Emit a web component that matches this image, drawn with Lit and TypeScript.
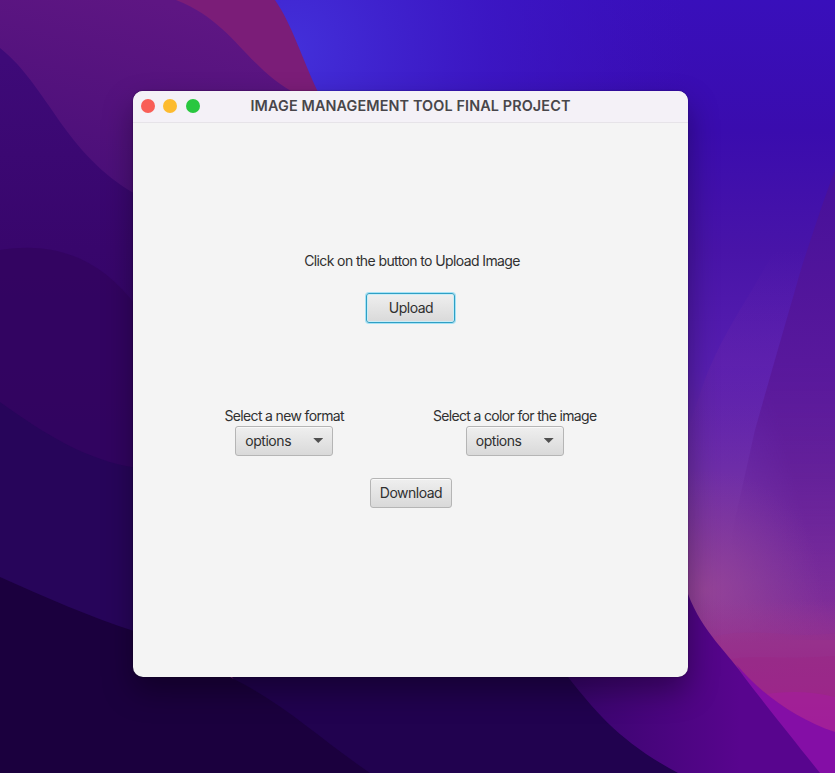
import { LitElement, html, css } from "lit";
import { customElement } from "lit/decorators.js";

@customElement("desktop-wallpaper")
class DesktopWallpaper extends LitElement {
  static styles = css`
    :host { display: block; }
    svg { display: block; width: 835px; height: 773px; }
  `;
  render() {
    return html`<svg viewBox="0 0 835 773" aria-hidden="true">
      <defs>
        <linearGradient id="sky" gradientUnits="userSpaceOnUse" x1="740" y1="0" x2="740" y2="660">
          <stop offset="0" stop-color="#390fbb" /><stop offset=".2" stop-color="#3a0cae" />
          <stop offset=".38" stop-color="#4814a8" /><stop offset=".56" stop-color="#571eb0" />
          <stop offset=".74" stop-color="#7230a6" /><stop offset=".88" stop-color="#84389c" />
          <stop offset="1" stop-color="#963290" />
        </linearGradient>
        <radialGradient id="light" gradientUnits="userSpaceOnUse" cx="290" cy="50" r="400">
          <stop offset="0" stop-color="#4330da" /><stop offset=".5" stop-color="#3c18c6" stop-opacity=".8" />
          <stop offset="1" stop-color="#3b12c0" stop-opacity="0" />
        </radialGradient>
        <linearGradient id="rightBand" gradientUnits="userSpaceOnUse" x1="800" y1="175" x2="800" y2="640">
          <stop offset="0" stop-color="#47109a" /><stop offset=".4" stop-color="#58189c" />
          <stop offset=".65" stop-color="#642098" stop-opacity=".9" />
          <stop offset="1" stop-color="#7c2898" stop-opacity=".5" />
        </linearGradient>
        <linearGradient id="bandFade" gradientUnits="userSpaceOnUse" x1="725" y1="520" x2="800" y2="500">
          <stop offset="0" stop-color="#000" /><stop offset="1" stop-color="#fff" />
        </linearGradient>
        <linearGradient id="bandDepth" gradientUnits="userSpaceOnUse" x1="0" y1="350" x2="0" y2="440">
          <stop offset="0" stop-color="#fff" /><stop offset="1" stop-color="#fff" stop-opacity="0" />
        </linearGradient>
        <mask id="bandMask" maskUnits="userSpaceOnUse" x="680" y="150" width="155" height="623">
          <rect x="680" y="150" width="155" height="623" fill="url(#bandFade)" />
          <rect x="680" y="150" width="155" height="623" fill="url(#bandDepth)" />
        </mask>
        <linearGradient id="ray" gradientUnits="userSpaceOnUse" x1="0" y1="250" x2="0" y2="470">
          <stop offset="0" stop-color="#7028a8" stop-opacity="0" />
          <stop offset=".5" stop-color="#7028a8" stop-opacity=".28" />
          <stop offset="1" stop-color="#7028a8" stop-opacity="0" />
        </linearGradient>
        <radialGradient id="glow" gradientUnits="userSpaceOnUse" cx="705" cy="590" r="120">
          <stop offset="0" stop-color="#9a4898" stop-opacity=".75" /><stop offset="1" stop-color="#803898" stop-opacity="0" />
        </radialGradient>
        <linearGradient id="rose" gradientUnits="userSpaceOnUse" x1="0" y1="600" x2="0" y2="720">
          <stop offset="0" stop-color="#9a3a90" stop-opacity="0" /><stop offset=".45" stop-color="#962d8c" stop-opacity=".8" />
          <stop offset="1" stop-color="#9c2490" />
        </linearGradient>
        <linearGradient id="violet" gradientUnits="userSpaceOnUse" x1="570" y1="700" x2="740" y2="700">
          <stop offset="0" stop-color="#38056c" /><stop offset="1" stop-color="#58058e" />
        </linearGradient>
        <linearGradient id="plum" gradientUnits="userSpaceOnUse" x1="150" y1="0" x2="100" y2="190">
          <stop offset="0" stop-color="#5e1683" /><stop offset="1" stop-color="#4a0f78" />
        </linearGradient>
        <linearGradient id="indigo" gradientUnits="userSpaceOnUse" x1="0" y1="60" x2="0" y2="600">
          <stop offset="0" stop-color="#3e0a78" /><stop offset=".35" stop-color="#38066c" />
          <stop offset="1" stop-color="#2a0560" />
        </linearGradient>
      </defs>
      <rect width="835" height="773" fill="url(#sky)" />
      <rect width="835" height="460" fill="url(#light)" />
      <path d="M752 290C735 318 718 345 704 382L688 430V480H835V250H775Z" fill="url(#ray)" />
      <path d="M835 170C822 204 812 236 802 266L768 384L755 430L735 520L715 640H835Z" fill="url(#rightBand)" mask="url(#bandMask)" />
      <rect x="580" y="460" width="255" height="260" fill="url(#glow)" />
      <path d="M680 600H835V773H730Z" fill="url(#rose)" />
      <path d="M710 638C750 625 790 640 835 633V700H730Z" fill="#a03080" opacity=".14" />
      <path d="M730 659C765 655 790 660 835 656V710H750Z" fill="#a0207c" opacity=".2" />
      <path d="M765 694C790 691 810 691 835 697V740Z" fill="#a81aa4" opacity=".45" />
      <path d="M736 664C760 693 796 719 835 732V773H800Z" fill="#840ea6" />
      <path d="M560 660L688 594C702 632 730 655 745 678C764 703 800 748 820 773H560Z" fill="url(#violet)" />
      <path d="M568 677C597 714 622 743 678 773H300L220 660Z" fill="#21024f" />
      <path d="M0 0H275C292 24 302 59 319 94H150L0 80Z" fill="#7b1d78" />
      <path d="M0 0H176C236 24 244 67 300 96L160 210H0Z" fill="url(#plum)" />
      <path d="M0 48C48 86 64 154 137 195V640H0Z" fill="url(#indigo)" />
      <path d="M0 250C60 240 105 263 137 307V480C90 455 45 455 0 402Z" fill="#32045f" opacity=".8" />
      <path d="M0 402C45 434 85 460 137 468V640L0 580Z" fill="#27055a" />
      <path d="M0 577C45 597 90 617 137 632L230 677C285 704 320 739 370 773H0Z" fill="#1b003e" />
    </svg>`;
  }
}

@customElement("option-picker")
class OptionPicker extends LitElement {
  static properties = { label: { type: String } };
  declare label: string;
  static styles = css`
    :host { display: flex; flex-direction: column; align-items: center; }
    .label { font-size: 14px; line-height: 20px; letter-spacing: -0.66px; white-space: nowrap; }
    .picker {
      box-sizing: border-box; width: 98px; height: 30px; padding: 0 9px 2px 9px;
      display: flex; align-items: center; justify-content: space-between;
      border: 1px solid #b5b5b5; border-radius: 3px;
      background: linear-gradient(#efefef, #d9d9d9);
      box-shadow: inset 0 1px #f9f9f9;
      font: inherit; font-size: 14px; letter-spacing: -0.45px; color: #303030;
    }
    .arrow { width: 10px; height: 5px; margin-top: 1px; background: #505050; clip-path: polygon(0 0, 100% 0, 50% 100%); }
  `;
  render() {
    return html`<span class="label">${this.label}</span>
      <button class="picker"><span>options</span><span class="arrow"></span></button>`;
  }
}

@customElement("app-root")
class AppRoot extends LitElement {
  static styles = css`
    :host {
      display: grid; width: 835px; height: 773px; overflow: hidden;
      font-family: Inter, "Liberation Sans", sans-serif; color: #303030;
    }
    desktop-wallpaper, .window { grid-area: 1 / 1; }
    .window {
      z-index: 1; width: 555px; height: 586px; margin: 91px 0 0 133px;
      border-radius: 10px; overflow: hidden; background: #f4f4f4;
      box-shadow: 0 14px 30px rgba(0, 0, 0, .34), 0 0 2px rgba(0, 0, 0, .4);
    }
    .titlebar {
      box-sizing: border-box; height: 32px; padding: 0 8px 2px;
      display: grid; grid-template-columns: 60px 1fr 60px; align-items: center;
      background: #f4f1f7; border-bottom: 1px solid #e6e3e8;
    }
    .lights { display: flex; gap: 8.3px; padding-top: 1px; }
    .light { width: 14px; height: 14px; border-radius: 50%; }
    .close { background: #f95e57; }
    .minimize { background: #fdbb2f; }
    .maximize { background: #29c73f; }
    .title {
      margin: 0; text-align: center; white-space: nowrap;
      font-size: 14.4px; line-height: 20px; font-weight: 600; letter-spacing: 0.12px; color: #48464a;
    }
    .content { display: flex; flex-direction: column; align-items: center; padding-top: 128px; }
    .prompt { margin: 0 0 22px 3px; font-size: 14px; line-height: 20px; letter-spacing: -0.61px; }
    .button {
      box-sizing: border-box; height: 30px; padding: 0 0 2px 1px;
      border: 1px solid #b5b5b5; border-radius: 3px;
      background: linear-gradient(#efefef, #d9d9d9); box-shadow: inset 0 1px #f9f9f9;
      font: inherit; font-size: 14px; letter-spacing: -0.5px; color: #303030;
    }
    .upload {
      width: 89px; border-color: #2f9fc4;
      box-shadow: 0 0 0 1px #a5e2f5, inset 0 0 0 1px #c9edf7;
    }
    .download { width: 82px; }
    .pickers { display: flex; gap: 89px; margin: 83px 0 22px; }
  `;
  render() {
    return html`
      <desktop-wallpaper></desktop-wallpaper>
      <main class="window">
        <header class="titlebar">
          <div class="lights">
            <span class="light close"></span><span class="light minimize"></span><span class="light maximize"></span>
          </div>
          <h1 class="title">IMAGE MANAGEMENT TOOL FINAL PROJECT</h1>
        </header>
        <section class="content">
          <p class="prompt">Click on the button to Upload Image</p>
          <button class="button upload">Upload</button>
          <div class="pickers">
            <option-picker label="Select a new format"></option-picker>
            <option-picker label="Select a color for the image"></option-picker>
          </div>
          <button class="button download">Download</button>
        </section>
      </main>`;
  }
}
